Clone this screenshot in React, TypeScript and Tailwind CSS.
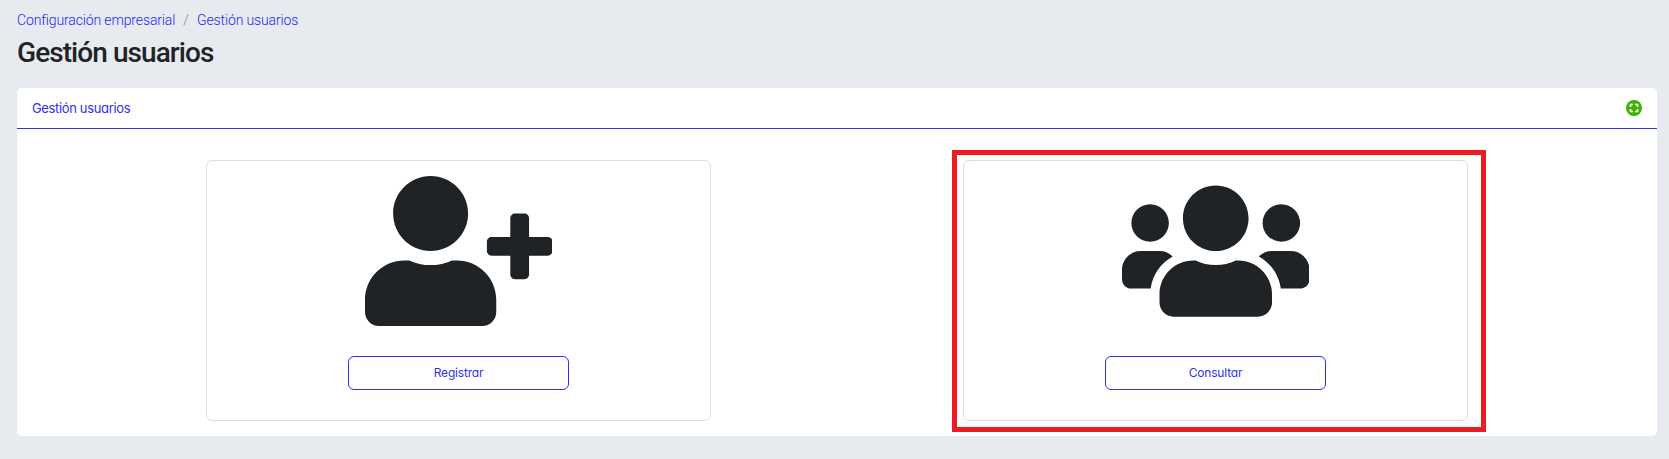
import React from "react";
import { FaUserPlus, FaUsers } from "react-icons/fa";

function OptionCard({ icon, label }: { icon: React.ReactNode; label: string }) {
  return (
    <section className="flex h-[261px] w-[505px] flex-col items-center rounded-[6px] border border-[#dedfe3] bg-white pt-[15px]">
      <div className="flex h-[150px] items-center text-[#1f2326]">{icon}</div>
      <button className="mt-[30px] h-[34px] w-[221px] rounded-[6px] border border-[#2f2ff0] bg-white text-[12px] tracking-[-0.2px] text-[#2f2ff0]">
        {label}
      </button>
    </section>
  );
}

function HelpIcon() {
  return (
    <svg viewBox="0 0 16 16" className="h-4 w-4">
      <circle cx="8" cy="8" r="8" fill="#3cb400" />
      <path d="M4.5 7V4.5H7M9 4.5h2.5V7M11.5 9v2.5H9M7 11.5H4.5V9" fill="none" stroke="#fff" strokeWidth="1.7" />
    </svg>
  );
}

export default function App() {
  return (
    <main className="h-[459px] bg-[#e7ebf0] pt-[10px] pr-3 pl-[17px] font-['Inter','Liberation_Sans',sans-serif] [font-feature-settings:'cv11']">
      <nav className="flex h-[21px] items-center font-['Roboto','Liberation_Sans',sans-serif] text-[14px] font-light tracking-[-0.13px] whitespace-nowrap text-[#2424f5]">
        <a className="w-[158px]">Configuración empresarial</a>
        <span className="w-[22px] text-center text-[#7b8087]">/</span>
        <a>Gestión usuarios</a>
      </nav>
      <h1 className="h-10 pt-[4px] font-['Roboto','Liberation_Sans',sans-serif] text-[28px] leading-9 font-medium tracking-[-0.93px] text-[#1f2326]">
        Gestión usuarios
      </h1>
      <div className="mt-[17px] h-[348px] rounded-[5px] bg-white">
        <header className="flex h-[41px] items-center justify-between border-b border-[#2f2ff0] pr-[15px] pl-[15px] text-[13px] tracking-[-0.35px] text-[#2f2ff0]">
          <h2 className="pt-[2px]">Gestión usuarios</h2>
          <HelpIcon />
        </header>
        <div className="flex pt-[31px] pl-[189px]">
          <OptionCard icon={<FaUserPlus className="h-[150px] w-[187.5px]" />} label="Registrar" />
          <div className="-mt-[10px] ml-[241px] h-[282px] w-[534px] border-[5px] border-[#ed1c24] pt-[5px] pl-[6px]">
            <OptionCard icon={<FaUsers className="h-[150px] w-[187.5px]" />} label="Consultar" />
          </div>
        </div>
      </div>
    </main>
  );
}
